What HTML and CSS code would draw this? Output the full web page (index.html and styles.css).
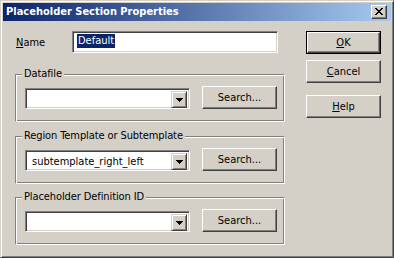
FILE: index.html
```html
<!DOCTYPE html>
<html>
<head>
<meta charset="utf-8">
<link rel="stylesheet" href="styles.css">
</head>
<body>
<div class="window">
  <div class="titlebar">
    <span class="title">Placeholder Section Properties</span>
    <div class="close">
      <svg width="8" height="7" viewBox="0 0 8 7" shape-rendering="crispEdges">
        <path fill="#000" d="M0 0h2v1H0zM6 0h2v1H6zM1 1h2v1H1zM5 1h2v1H5zM2 2h4v1H2zM3 3h2v1H3zM2 4h4v1H2zM1 5h2v1H1zM5 5h2v1H5zM0 6h2v1H0zM6 6h2v1H6z"/>
      </svg>
    </div>
  </div>
  <div class="content">
    <div class="main">
      <div class="name-row">
        <span class="label"><u>N</u>ame</span>
        <div class="textbox"><span class="sel">Default</span></div>
      </div>
      <div class="group g1">
        <span class="legend">Datafile</span>
        <div class="combo"><span class="combo-text"></span><span class="drop"><svg class="arrow" width="7" height="4" viewBox="0 0 7 4" shape-rendering="crispEdges"><path fill="#000" d="M0 0h7v1H0zM1 1h5v1H1zM2 2h3v1H2zM3 3h1v1H3z"/></svg></span></div>
        <div class="btn search">Search...</div>
      </div>
      <div class="group g2">
        <span class="legend">Region Template or Subtemplate</span>
        <div class="combo"><span class="combo-text">subtemplate_right_left</span><span class="drop"><svg class="arrow" width="7" height="4" viewBox="0 0 7 4" shape-rendering="crispEdges"><path fill="#000" d="M0 0h7v1H0zM1 1h5v1H1zM2 2h3v1H2zM3 3h1v1H3z"/></svg></span></div>
        <div class="btn search">Search...</div>
      </div>
      <div class="group g3">
        <span class="legend">Placeholder Definition ID</span>
        <div class="combo"><span class="combo-text"></span><span class="drop"><svg class="arrow" width="7" height="4" viewBox="0 0 7 4" shape-rendering="crispEdges"><path fill="#000" d="M0 0h7v1H0zM1 1h5v1H1zM2 2h3v1H2zM3 3h1v1H3z"/></svg></span></div>
        <div class="btn search">Search...</div>
      </div>
    </div>
    <div class="side">
      <div class="btn default"><span class="btn-inner"><u>O</u>K</span></div>
      <div class="btn cancel"><u>C</u>ancel</div>
      <div class="btn help"><u>H</u>elp</div>
    </div>
  </div>
</div>
</body>
</html>
```

FILE: styles.css
```css
* { box-sizing: border-box; }
html, body { margin: 0; padding: 0; background: #d4d0c8; }
body {
  font-family: "DejaVu Sans Condensed", "DejaVu Sans", sans-serif;
  font-stretch: condensed;
  font-size: 11px;
  color: #000;
}
.window {
  width: 394px;
  height: 258px;
  background: #d4d0c8;
  border: 1px solid;
  border-color: #d4d0c8 #404040 #404040 #d4d0c8;
  box-shadow: inset 1px 1px #fff, inset -1px -1px #808080;
  padding: 2px;
}
.titlebar {
  height: 18px;
  background: linear-gradient(to right, #0a246a, #a6caf0);
  display: flex;
  align-items: center;
  justify-content: space-between;
  padding: 0 4px 0 3px;
}
.title {
  color: #fff;
  font-weight: bold;
  font-size: 11px;
  line-height: 18px;
}
.close {
  width: 16px;
  height: 14px;
  background: #d4d0c8;
  border: 1px solid;
  border-color: #fff #404040 #404040 #fff;
  box-shadow: inset -1px -1px #808080;
  display: flex;
  align-items: center;
  justify-content: center;
  padding-bottom: 1px;
}
.close svg { display: block; }
.content {
  display: flex;
  padding: 10px 0 0 12px;
}
.main {
  width: 270px;
  display: flex;
  flex-direction: column;
}
.name-row {
  display: flex;
  align-items: center;
  height: 22px;
}
.label { width: 57px; padding-left: 1px; }
.textbox {
  width: 206px;
  height: 22px;
  background: #fff;
  border: 1px solid;
  border-color: #808080 #fff #fff #808080;
  box-shadow: inset 1px 1px #404040, inset -1px -1px #d4d0c8;
  padding: 2px 0 0 4px;
  line-height: 14px;
}
.sel { background: #0a246a; color: #fff; display: inline-block; padding: 0 1px; }
.group {
  position: relative;
  height: 48px;
  border: 1px solid;
  border-color: #808080 #fff #fff #808080;
  box-shadow: inset 1px 1px #fff, inset -1px -1px #808080;
  display: flex;
  align-items: flex-start;
  padding: 11px 0 0 9px;
}
.g1 { margin-top: 21px; }
.g2 { margin-top: 14px; }
.g3 { margin-top: 13px; }
.legend {
  position: absolute;
  left: 6px;
  top: -8px;
  padding: 0 2px 0 2px;
  background: #d4d0c8;
  line-height: 14px;
  letter-spacing: -0.1px;
}
.combo {
  width: 165px;
  height: 21px;
  margin-top: 2px;
  background: #fff;
  border: 1px solid;
  border-color: #808080 #fff #fff #808080;
  box-shadow: inset 1px 1px #404040, inset -1px -1px #d4d0c8;
  padding: 2px;
  display: flex;
}
.combo-text { flex: 1; padding-left: 4px; line-height: 17px; }
.drop {
  width: 16px;
  height: 17px;
  background: #d4d0c8;
  border: 1px solid;
  border-color: #d4d0c8 #404040 #404040 #d4d0c8;
  box-shadow: inset 1px 1px #fff, inset -1px -1px #808080;
  display: flex;
  align-items: center;
  justify-content: center;
}
.arrow { display: block; }
.btn {
  width: 75px;
  height: 23px;
  background: #d4d0c8;
  border: 1px solid;
  border-color: #fff #404040 #404040 #fff;
  box-shadow: inset -1px -1px #808080;
  display: flex;
  align-items: center;
  justify-content: center;
}
.search { margin-left: 12px; }
.side {
  margin-left: 21px;
  display: flex;
  flex-direction: column;
}
.default {
  border: 1px solid #000;
  box-shadow: none;
  padding: 0;
}
.btn-inner {
  width: 100%;
  height: 100%;
  border: 1px solid;
  border-color: #fff #404040 #404040 #fff;
  box-shadow: inset -1px -1px #808080;
  display: flex;
  align-items: center;
  justify-content: center;
}
.cancel { margin-top: 6px; }
.help { margin-top: 12px; }
u { text-decoration: underline; text-underline-offset: 1px; }
```
